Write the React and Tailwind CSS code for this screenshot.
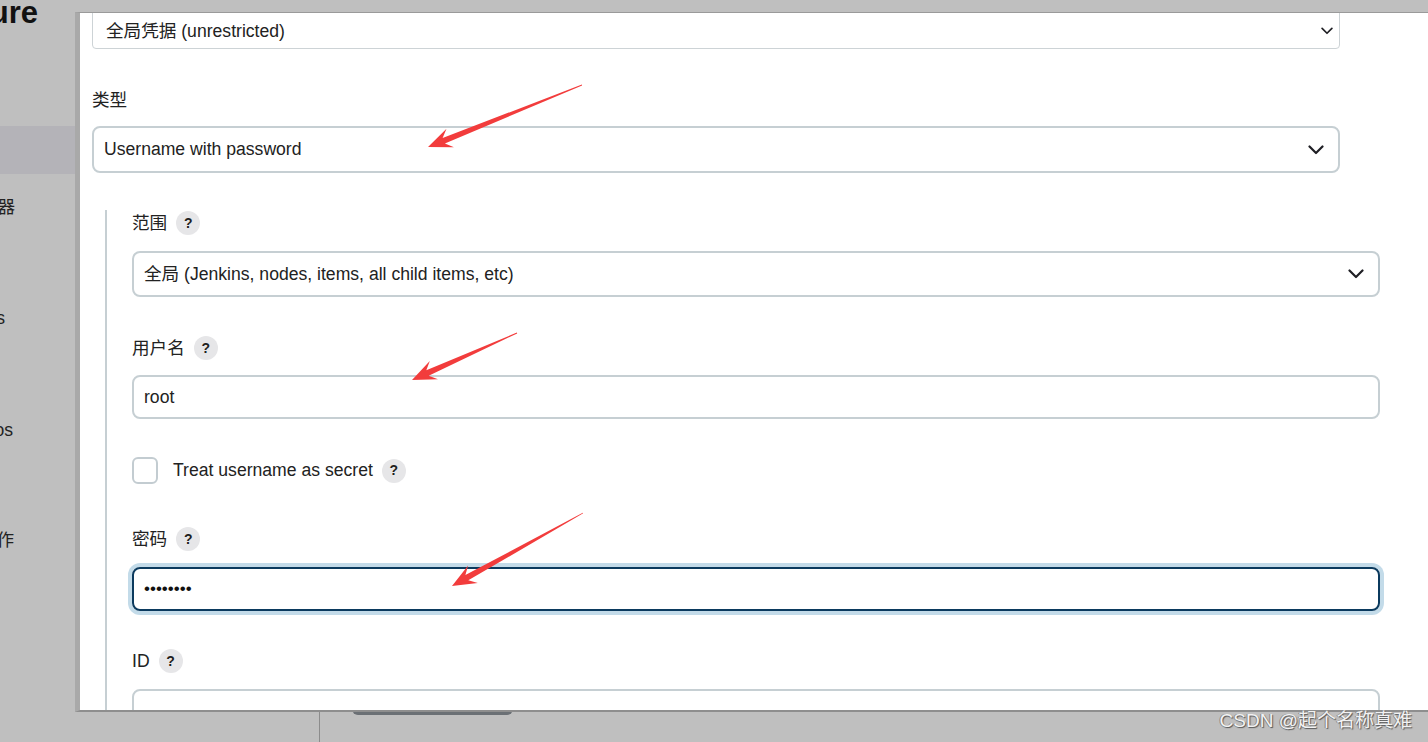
import React from "react";

const font = { fontFamily: '"Liberation Sans", "Noto Sans CJK SC", Arial, sans-serif' };

const Chevron = ({ className = "" }) => (
    <svg viewBox="0 0 16 10" className={className} fill="none" stroke="#1f1f24" strokeWidth="2.2" strokeLinecap="round" strokeLinejoin="round">
        <path d="M1.5 1.5 L8 8 L14.5 1.5" />
    </svg>
);

const Help = () => (
    <span className="ml-[9px] flex h-[24px] w-[24px] items-center justify-center rounded-full bg-[#e6e6e8] text-[14px] font-bold text-[#1e1e1e]">
        ?
    </span>
);

const Label = ({ text, help = true, className = "" }) => (
    <div className={`flex h-[24px] items-center text-[17.6px] text-[#222] ${className}`}>
        <span>{text}</span>
        {help && <Help />}
    </div>
);

// red annotation arrow, drawn from a thin tail to a barbed head
const Arrow = ({ x1, y1, x2, y2 }) => {
    const dx = x2 - x1;
    const dy = y2 - y1;
    const len = Math.hypot(dx, dy);
    const ux = dx / len;
    const uy = dy / len;
    const nx = -uy;
    const ny = ux;
    const head = 24;
    const wing = 10;
    const neck = 3;
    const p = (a, b) => `${a.toFixed(1)},${b.toFixed(1)}`;
    const pts = [
        p(x1 + nx * 0.4, y1 + ny * 0.4),
        p(x2 - ux * (head - 7) + nx * neck, y2 - uy * (head - 7) + ny * neck),
        p(x2 - ux * head + nx * wing, y2 - uy * head + ny * wing),
        p(x2, y2),
        p(x2 - ux * head - nx * wing, y2 - uy * head - ny * wing),
        p(x2 - ux * (head - 7) - nx * neck, y2 - uy * (head - 7) - ny * neck),
        p(x1 - nx * 0.4, y1 - ny * 0.4),
    ].join(" ");
    return <polygon points={pts} fill="#f23c3c" />;
};

// sidebar entries are mostly hidden behind the dialog, only their tail shows
const SideItem = ({ text, width, className = "" }) => (
    <div
        className={`flex h-[24px] items-center justify-end whitespace-nowrap text-[17.6px] text-[#222] ${className}`}
        style={{ width }}
    >
        <span>{text}</span>
    </div>
);

export default function App() {
    return (
        <div className="relative h-[742px] w-[1428px] overflow-hidden bg-[#bfbfbf]" style={font}>
            {/* page behind the dialog */}
            <div className="flex h-full flex-col">
                <div className="flex h-[30px] w-[38px] items-end justify-end whitespace-nowrap pb-[2px] text-[31px] font-bold leading-none text-[#111]">
                    <span>Configure</span>
                </div>
                <div className="flex flex-1">
                    <div className="flex w-[320px] flex-col border-r border-[#8c8c8c]">
                        <div className="mt-[96px] h-[48px] w-[80px] bg-[#b4b3b8]" />
                        <SideItem text="管理器" width={15} className="mt-[21px]" />
                        <SideItem text="Credentials" width={5} className="mt-[87px]" />
                        <SideItem text="Repos" width={13} className="mt-[88px]" />
                        <SideItem text="操作" width={14} className="mt-[86px]" />
                    </div>
                    <div className="flex flex-1 flex-col justify-end pb-[27px] pl-[32px]">
                        <div className="h-[40px] w-[161px] rounded-[6px] border-b-[3px] border-[#6b7075] bg-[#c5c8cc]" />
                    </div>
                </div>
            </div>

            {/* dialog */}
            <div className="absolute left-[75px] top-[12px] h-[700px] w-[1360px] overflow-hidden border-l-[5px] border-t border-b-[2px] border-l-[#a9a9a9] border-t-[#9a9a9a] border-b-[#8e8e8e] bg-white">
                <div className="ml-[12px] w-[1248px]">
                    <div className="-mt-[10px] flex h-[46px] items-center justify-between rounded-[4px] border border-[#cdd3d6] pl-[13px] pr-[6px] pt-[10px] text-[17.6px] text-[#222]">
                        <span>全局凭据 (unrestricted)</span>
                        <Chevron className="h-[8px] w-[12px]" />
                    </div>

                    <Label text="类型" help={false} className="mt-[39px]" />
                    <div className="mt-[14px] flex h-[47px] items-center justify-between rounded-[8px] border-2 border-[#c6cfd3] pl-[10px] pr-[14px] text-[17.6px] text-[#222]">
                        <span>Username with password</span>
                        <Chevron className="h-[10px] w-[16px]" />
                    </div>

                    <div className="ml-[13px] mt-[37px] border-l-2 border-[#c6cfd3] pl-[25px] pt-[1px] pb-[40px]">
                        <Label text="范围" />
                        <div className="mt-[16px] flex h-[46px] w-[1248px] items-center justify-between rounded-[8px] border-2 border-[#c6cfd3] pl-[10px] pr-[14px] text-[17.6px] text-[#222]">
                            <span>全局 (Jenkins, nodes, items, all child items, etc)</span>
                            <Chevron className="h-[10px] w-[16px]" />
                        </div>

                        <Label text="用户名" className="mt-[39px]" />
                        <div className="mt-[15px] flex h-[44px] w-[1248px] items-center rounded-[8px] border-2 border-[#c6cfd3] pl-[10px] text-[17.6px] text-[#222]">
                            root
                        </div>

                        <div className="mt-[38px] flex h-[27px] items-center text-[17.6px] text-[#222]">
                            <span className="h-[27px] w-[26px] rounded-[6px] border-2 border-[#c3ccd1] bg-white" />
                            <span className="ml-[15px]">Treat username as secret</span>
                            <Help />
                        </div>

                        <Label text="密码" className="mt-[43px]" />
                        <div className="mt-[16px] flex h-[44px] w-[1248px] items-center rounded-[8px] border-2 border-[#0b3a5e] pl-[10px] text-[17px] text-[#111] shadow-[0_0_0_4px_#c3dbe9]">
                            ••••••••
                        </div>

                        <Label text="ID" className="mt-[38px]" />
                        <div className="mt-[16px] h-[44px] w-[1248px] rounded-[8px] border-2 border-[#c6cfd3]" />
                    </div>
                </div>
            </div>

            {/* annotations */}
            <svg className="pointer-events-none absolute left-0 top-0" width="1428" height="742">
                <Arrow x1={582} y1={85} x2={428} y2={147} />
                <Arrow x1={517} y1={333} x2={412} y2={380} />
                <Arrow x1={583} y1={513} x2={452} y2={586} />
            </svg>

            <div className="absolute bottom-[10px] right-[16px] text-[19px] leading-[22px] text-[#f2f2f2] [text-shadow:1px_1px_1px_#555,-1px_0_0_#888]">
                CSDN @起个名称真难
            </div>
        </div>
    );
}
